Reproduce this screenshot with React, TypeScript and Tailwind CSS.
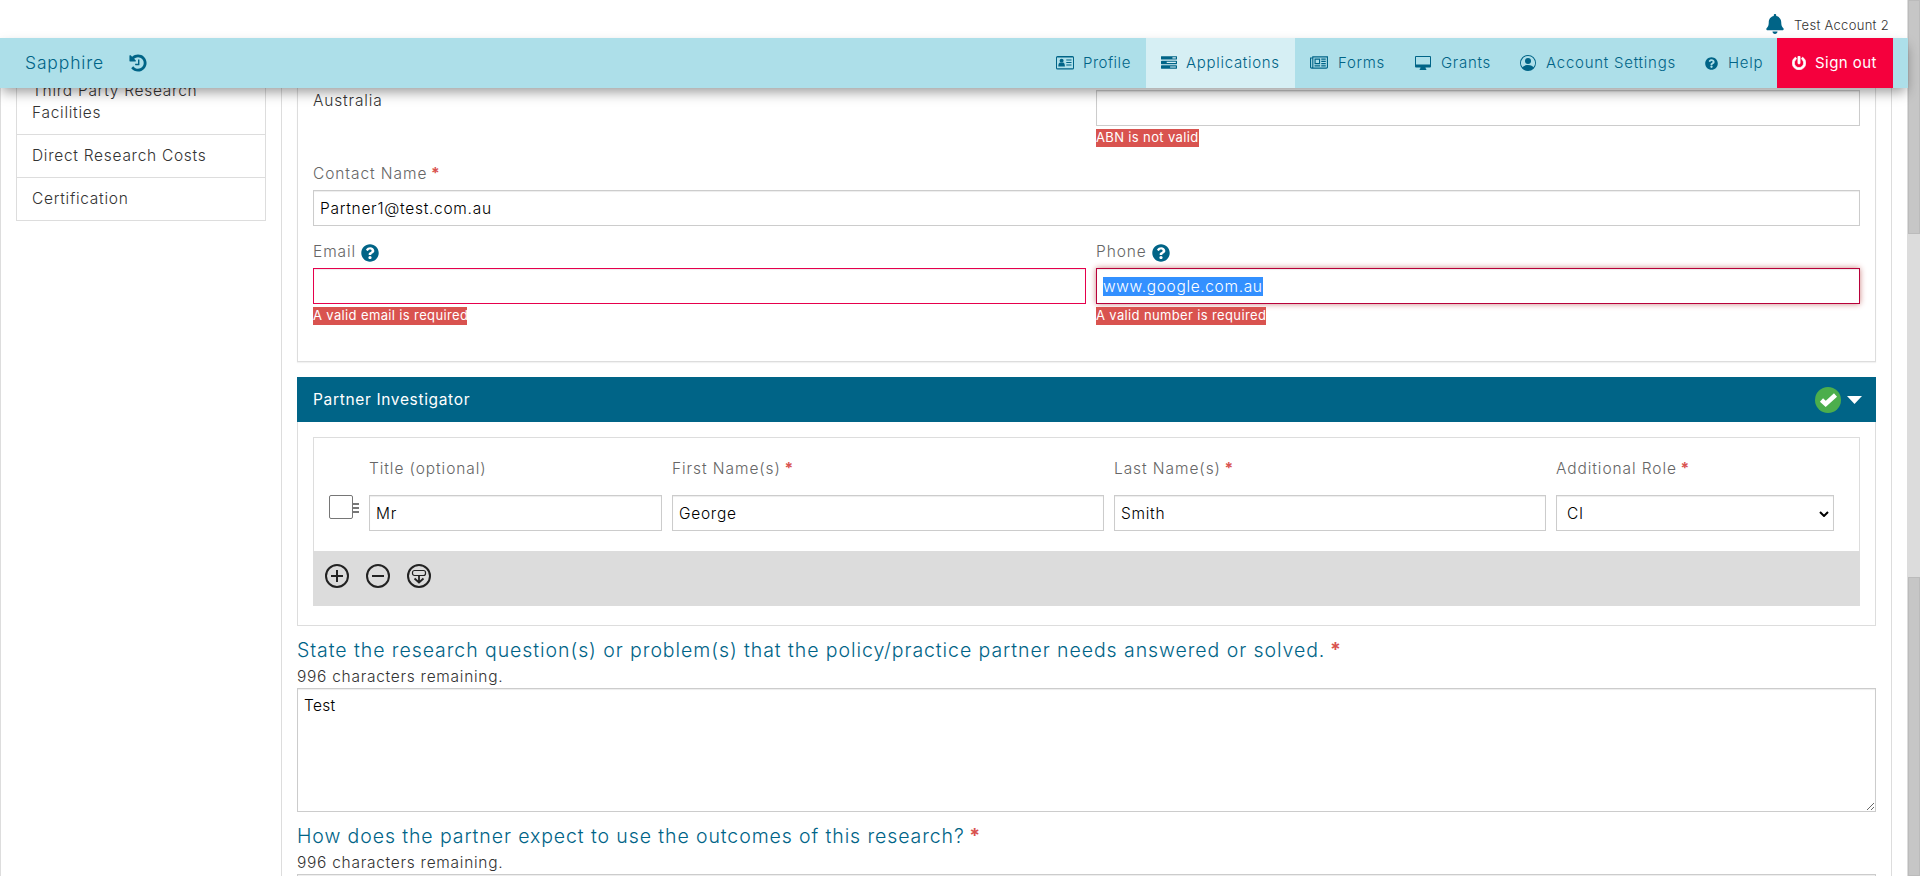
import type { ReactNode } from "react";
import { FaBell, FaPowerOff, FaQuestionCircle } from "react-icons/fa";
import { BsPersonCircle } from "react-icons/bs";

const Star = () => <span className="font-bold tracking-normal text-[#d9534f]"> *</span>;

function HistoryIcon() {
  return (
    <svg viewBox="0 0 1792 1792" className="h-5 w-5 fill-current">
      <path d="M1664 896q0 156-61 298t-164 245-245 164-298 61q-172 0-327-72.5t-264-204.5q-7-10-6.5-22.5t8.5-20.5l137-138q10-9 25-9 16 2 23 12 73 95 179 147t225 52q104 0 198.5-40.5t163.5-109.5 109.5-163.5 40.5-198.5-40.5-198.5-109.5-163.5-163.5-109.5-198.5-40.5q-98 0-188 35.5t-160 101.5l137 138q31 30 14 69-17 40-59 40h-448q-26 0-45-19t-19-45v-448q0-42 40-59 39-17 69 14l130 129q107-101 244.5-156.5t284.5-55.5q156 0 298 61t245 164 164 245 61 298zm-640-288v448q0 14-9 23t-23 9h-320q-14 0-23-9t-9-23v-64q0-14 9-23t23-9h224v-352q0-14 9-23t23-9h64q14 0 23 9t9 23z" />
    </svg>
  );
}

function CardIcon() {
  return (
    <svg viewBox="0 0 18 14" className="h-3.5 w-[18px] fill-current">
      <path fillRule="evenodd" d="M1.500 0h15A1.500 1.500 0 0 1 18 1.500v10.500a1.500 1.500 0 0 1-1.500 1.500h-15A1.500 1.500 0 0 1 0 12V1.500A1.500 1.500 0 0 1 1.500 0zM1 1.500v10.800h16V1.500z" />
      <circle cx="5.600" cy="4.800" r="2" />
      <path d="M2.300 10.500c0-2.500.8-4 2-4q1.300 1 2.600 0c1.200 0 2 1.500 2 4z" />
      <path d="M10.300 3.600h5.200v1h-5.200zM10.300 6h5.200v1h-5.200zM10.300 8.600h5.200v1h-5.200z" />
    </svg>
  );
}

function TasksIcon() {
  return (
    <svg viewBox="0 0 1792 1792" className="h-4 w-4 fill-current">
      <path d="M1024 1408h640v-128h-640v128zM640 896h1024v-128h-1024v128zM1280 384h384v-128h-384v128zM1792 1216v256q0 26-19 45t-45 19h-1664q-26 0-45-19t-19-45v-256q0-26 19-45t45-19h1664q26 0 45 19t19 45zM1792 704v256q0 26-19 45t-45 19h-1664q-26 0-45-19t-19-45v-256q0-26 19-45t45-19h1664q26 0 45 19t19 45zM1792 192v256q0 26-19 45t-45 19h-1664q-26 0-45-19t-19-45v-256q0-26 19-45t45-19h1664q26 0 45 19t19 45z" fillRule="evenodd" />
    </svg>
  );
}

function NewspaperIcon() {
  return (
    <svg viewBox="0 0 2048 1792" className="h-4 w-[18px] fill-current">
      <path d="M1024 512h-384v384h384v-384zm128 640v128h-640v-128h640zm0-768v640h-640v-640h640zm640 768v128h-512v-128h512zm0-256v128h-512v-128h512zm0-256v128h-512v-128h512zm0-256v128h-512v-128h512zm-1536 960v-960h-128v960q0 26 19 45t45 19 45-19 19-45zm1664 0v-1088h-1536v1088q0 33-11 64h1483q26 0 45-19t19-45zm128-1216v1216q0 80-56 136t-136 56h-1664q-80 0-136-56t-56-136v-1088h256v-128h1792z" />
    </svg>
  );
}

function DesktopIcon() {
  return (
    <svg viewBox="0 0 16 14" className="h-3.5 w-4 fill-current">
      <path fillRule="evenodd" d="M1 0h14a1 1 0 0 1 1 1v9.500a1 1 0 0 1-1 1h-4.500q0 1 .8 1.500v1H4.700v-1q.8-.5.8-1.500H1a1 1 0 0 1-1-1V1a1 1 0 0 1 1-1zM1 1v7.500h14V1z" />
    </svg>
  );
}

function NavItem({ icon, children, className }: { icon: ReactNode; children: ReactNode; className: string }) {
  return (
    <a className={"flex h-full items-center pl-[15px] whitespace-nowrap " + className}>
      {icon}
      <span>{children}</span>
    </a>
  );
}

function Field({ children, className }: { children?: ReactNode; className?: string }) {
  return (
    <div
      className={
        "flex h-9 items-center border bg-white px-[6px] pt-px text-black " +
        (className ?? "border-[#ccc] shadow-[inset_0_1px_1px_rgba(0,0,0,0.075)]")
      }
    >
      {children}
    </div>
  );
}

function ErrorTag({ children, className }: { children: ReactNode; className: string }) {
  return (
    <div
      className={
        "mt-[3px] h-[18px] bg-[#d9534f] text-[13px] leading-[17px] font-normal tracking-[0.36px] whitespace-nowrap text-white " +
        className
      }
    >
      {children}
    </div>
  );
}

const label = "text-[#666] tracking-[0.92px]";

export default function App() {
  return (
    <div className="flex h-[876px] w-[1920px] overflow-hidden bg-white font-['Inter',sans-serif] text-[15.5px] leading-[21.43px] font-light tracking-[0.72px] text-[#333]">
      <div className="flex h-full w-[1908px] shrink-0 flex-col">
        <header className="flex h-[38px] shrink-0 justify-end pr-[19px]">
          <FaBell className="mt-[14px] mr-[10px] h-5 w-[18px] text-[#006487]" />
          <span className="mt-[15px] text-[13px] tracking-[0.3px]">Test Account 2</span>
        </header>
        <nav className="relative z-10 flex h-[50px] shrink-0 items-center bg-[#addfe9] pr-[15px] text-[15px] tracking-[0.7px] text-[#006487] shadow-[0_6px_12px_-2px_rgba(0,0,0,0.4)]">
          <span className="ml-[25px] text-[17.5px] tracking-[0.85px]">Sapphire</span>
          <span className="mr-auto ml-6"><HistoryIcon /></span>
          <NavItem className="w-[105px] tracking-[0.5px]" icon={<span className="mr-[9px]"><CardIcon /></span>}>Profile</NavItem>
          <NavItem className="w-[149px] bg-[#d6eff4]" icon={<span className="mr-[9px]"><TasksIcon /></span>}>Applications</NavItem>
          <NavItem className="w-[105px]" icon={<span className="mr-[10px]"><NewspaperIcon /></span>}>Forms</NavItem>
          <NavItem className="w-[105px]" icon={<span className="mr-[10px]"><DesktopIcon /></span>}>Grants</NavItem>
          <NavItem className="w-[185px] tracking-[0.75px]" icon={<BsPersonCircle className="mr-[10px] h-4 w-4" />}>Account Settings</NavItem>
          <NavItem className="w-[87px]" icon={<FaQuestionCircle className="mr-[10px] h-[13px] w-[13px]" />}>Help</NavItem>
          <NavItem
            className="w-[116px] bg-[#f5003d] font-normal tracking-[0.45px] text-white"
            icon={<FaPowerOff className="mr-[9px] h-[14px] w-[14px] stroke-white stroke-[24px]" />}
          >
            Sign out
          </NavItem>
        </nav>

        <div className="flex h-[788px] overflow-hidden border-l border-[#ddd]">
          <aside className="w-[280px] shrink-0 pl-[15px]">
            <ul className="w-[250px] border-x border-[#ddd]">
              <li className="-mt-[8px] h-[55px] border-b border-[#ddd] pl-[15px] leading-[22px]">
                Third Party Research
                <br />
                Facilities
              </li>
              <li className="h-[43px] border-b border-[#ddd] pt-[10px] pl-[15px]">Direct Research Costs</li>
              <li className="h-[43px] border-b border-[#ddd] pt-[10px] pl-[15px]">Certification</li>
            </ul>
          </aside>

          <main className="w-[1611px] shrink-0 border-x border-[#ddd] px-[15px]">
            <section className="h-[274px] border-x border-b border-[#ddd] px-[15px] shadow-[0_1px_1px_rgba(0,0,0,0.05)]">
              <div className="flex h-[75px] justify-between">
                <span className="mt-[2px] tracking-[0.85px]">Australia</span>
                <div className="w-[764px] pt-[2px]">
                  <Field />
                  <ErrorTag className="w-[103px]">ABN is not valid</ErrorTag>
                </div>
              </div>
              <div className={"h-[27px] " + label}>Contact Name<Star /></div>
              <Field>Partner1@test.com.au</Field>
              <div className="mt-[15px] flex gap-[10px]">
                <div className="w-[773px]">
                  <div className={"flex h-[27px] " + label}>
                    Email <FaQuestionCircle className="mt-[3px] ml-[5px] h-[18px] w-[18px] text-[#006487]" />
                  </div>
                  <Field className="border-[#e6004c] shadow-[inset_0_1px_1px_rgba(0,0,0,0.075)]" />
                  <ErrorTag className="w-[154px]">A valid email is required</ErrorTag>
                </div>
                <div className="w-[764px]">
                  <div className={"flex h-[27px] " + label}>
                    Phone <FaQuestionCircle className="mt-[3px] ml-[5px] h-[18px] w-[18px] text-[#006487]" />
                  </div>
                  <Field className="border-[#b8003a] shadow-[inset_0_1px_1px_rgba(0,0,0,0.075),0_0_6px_#ce8483]">
                    <span className="h-[19px] bg-[#3390ff] leading-[19px] tracking-[0.65px] text-white">www.google.com.au</span>
                  </Field>
                  <ErrorTag className="w-[170px]">A valid number is required</ErrorTag>
                </div>
              </div>
            </section>

            <section className="mt-[15px] h-[249px] border-x border-b border-[#ddd]">
              <div className="-mx-px flex h-[45px] items-center bg-[#006487] pr-[14px] pl-4 font-normal tracking-[0.66px] text-white">
                <span>Partner Investigator</span>
                <svg viewBox="0 0 26 26" className="ml-auto h-[26px] w-[26px]">
                  <circle cx="13" cy="13" r="13" fill="#4cae4c" />
                  <path d="M6.500 13l4.200 4L20.500 8" fill="none" stroke="#fff" strokeWidth="4.500" />
                </svg>
                <svg viewBox="0 0 15 8" className="ml-[6px] h-2 w-[15px]">
                  <path d="M0 0h15L7.500 8z" fill="#fff" />
                </svg>
              </div>
              <div className="mx-[15px] mt-[15px] h-[169px] border-x border-t border-[#ddd]">
                <div className="flex h-[113px] items-start pl-[15px]">
                  <div className="mt-[57px] flex w-10 items-center">
                    <span className="h-6 w-6 rounded-[2px] border border-[#767676]" />
                    <span className="mt-px flex w-[6px] flex-col gap-[2px]">
                      <i className="h-[2px] bg-[#777]" />
                      <i className="h-[2px] bg-[#777]" />
                      <i className="h-[2px] bg-[#777]" />
                    </span>
                  </div>
                  <div className="w-[293px] pt-5">
                    <div className={"h-[37px] " + label}>Title (optional)</div>
                    <Field>Mr</Field>
                  </div>
                  <div className="ml-[10px] w-[432px] pt-5">
                    <div className={"h-[37px] " + label}>First Name(s)<Star /></div>
                    <Field>George</Field>
                  </div>
                  <div className="ml-[10px] w-[432px] pt-5">
                    <div className={"h-[37px] " + label}>Last Name(s)<Star /></div>
                    <Field>Smith</Field>
                  </div>
                  <div className="ml-[10px] w-[278px] pt-5">
                    <div className={"h-[37px] " + label}>Additional Role<Star /></div>
                    <Field>
                      <span className="ml-1">CI</span>
                      <svg viewBox="0 0 10 6" className="-mr-[2px] ml-auto h-[6px] w-[10px]">
                        <path d="M1 1l4 4 4-4" fill="none" stroke="#000" strokeWidth="2" />
                      </svg>
                    </Field>
                  </div>
                </div>
                <div className="-mx-px flex h-[55px] gap-[17px] bg-[#dcdcdc] pt-[13px] pl-3">
                  <svg viewBox="0 0 24 24" className="h-6 w-6" fill="none" stroke="#222" strokeWidth="2">
                    <circle cx="12" cy="12" r="11" />
                    <path d="M6 12h12M12 6v12" />
                  </svg>
                  <svg viewBox="0 0 24 24" className="h-6 w-6" fill="none" stroke="#222" strokeWidth="2">
                    <circle cx="12" cy="12" r="11" />
                    <path d="M6 12h12" />
                  </svg>
                  <svg viewBox="0 0 24 24" className="h-6 w-6" fill="none" stroke="#222" strokeWidth="2">
                    <circle cx="12" cy="12" r="11" />
                    <rect x="5.500" y="6.500" width="13" height="5" rx="2" strokeWidth="1.200" />
                    <path d="M12 11.500v7M7.500 14.500l4.500 4 4.500-4" strokeWidth="1.800" />
                  </svg>
                </div>
              </div>
            </section>

            <h2 className="mt-[11px] h-[29px] text-[19.5px] leading-[27px] tracking-[0.93px] text-[#006487]">
              State the research question(s) or problem(s) that the policy/practice partner needs answered or solved.
              <Star />
            </h2>
            <div className="h-[22px]">996 characters remaining.</div>
            <textarea
              className="block h-[124px] w-full border border-[#ccc] px-[6px] py-[6px] tracking-[0.3px] text-black shadow-[inset_0_1px_1px_rgba(0,0,0,0.075)]"
              defaultValue="Test"
            />
            <h2 className="mt-[11px] h-[29px] text-[19.5px] leading-[27px] tracking-[0.9px] text-[#006487]">
              How does the partner expect to use the outcomes of this research?
              <Star />
            </h2>
            <div className="h-[22px]">996 characters remaining.</div>
            <div className="h-[124px] border border-[#ccc] shadow-[inset_0_1px_1px_rgba(0,0,0,0.075)]" />
          </main>
        </div>
      </div>

      <div className="-ml-px flex h-full w-[13px] flex-col bg-[#dcdcdc] pl-px">
        <div className="h-[234px] border border-[#bbb] bg-[#c6c6c6]" />
        <div className="mt-[343px] h-[299px] border border-[#bbb] bg-[#c6c6c6]" />
      </div>
    </div>
  );
}
